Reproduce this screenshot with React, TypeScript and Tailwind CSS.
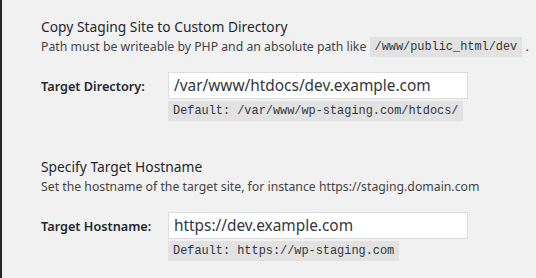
import React from 'react';

const font = { fontFamily: '"Noto Sans", "Open Sans", sans-serif' };
const mono = "font-['Liberation_Mono',monospace] text-[11.9px] text-[#32373c] bg-[#e2e2e2] px-[5px] h-[20px] leading-[20px]";

type FieldProps = {
  title: string;
  desc: React.ReactNode;
  label: string;
  value: string;
  def: string;
};

const Section: React.FC<FieldProps> = ({ title, desc, label, value, def }) => (
  <div className="flex flex-col">
    <h3 className="text-[13.8px] leading-[20px] text-[#23282d] font-normal whitespace-nowrap">{title}</h3>
    <p className="text-[12.25px] leading-[20px] h-[20px] text-[#444] whitespace-nowrap">{desc}</p>
    <div className="flex mt-[15px]">
      <div className="w-[127px] shrink-0 pt-[4px] text-[12.7px] leading-[20px] font-semibold text-[#23282d] whitespace-nowrap">
        {label}
      </div>
      <div className="flex flex-col items-start">
        <input
          readOnly
          value={value}
          className="w-[300px] h-[27px] px-[5px] bg-white border border-[#ddd] text-[15.4px] text-[#32373c] outline-none"
          style={font}
        />
        <code className={`mt-[2px] block ${mono}`}>{def}</code>
      </div>
    </div>
  </div>
);

export default function App() {
  return (
    <div className="w-[536px] h-[278px] bg-[#f1f1f1] border-l-2 border-[#23282d] overflow-hidden" style={font}>
      <div className="pl-[39px] pt-[17px] flex flex-col gap-[36px]">
        <Section
          title="Copy Staging Site to Custom Directory"
          desc={
            <>
              Path must be writeable by PHP and an absolute path like{' '}
              <code className={`inline-block align-top ${mono}`}>/www/public_html/dev</code> .
            </>
          }
          label="Target Directory:"
          value="/var/www/htdocs/dev.example.com"
          def="Default: /var/www/wp-staging.com/htdocs/"
        />
        <Section
          title="Specify Target Hostname"
          desc="Set the hostname of the target site, for instance https://staging.domain.com"
          label="Target Hostname:"
          value="https://dev.example.com"
          def="Default: https://wp-staging.com"
        />
      </div>
    </div>
  );
}
